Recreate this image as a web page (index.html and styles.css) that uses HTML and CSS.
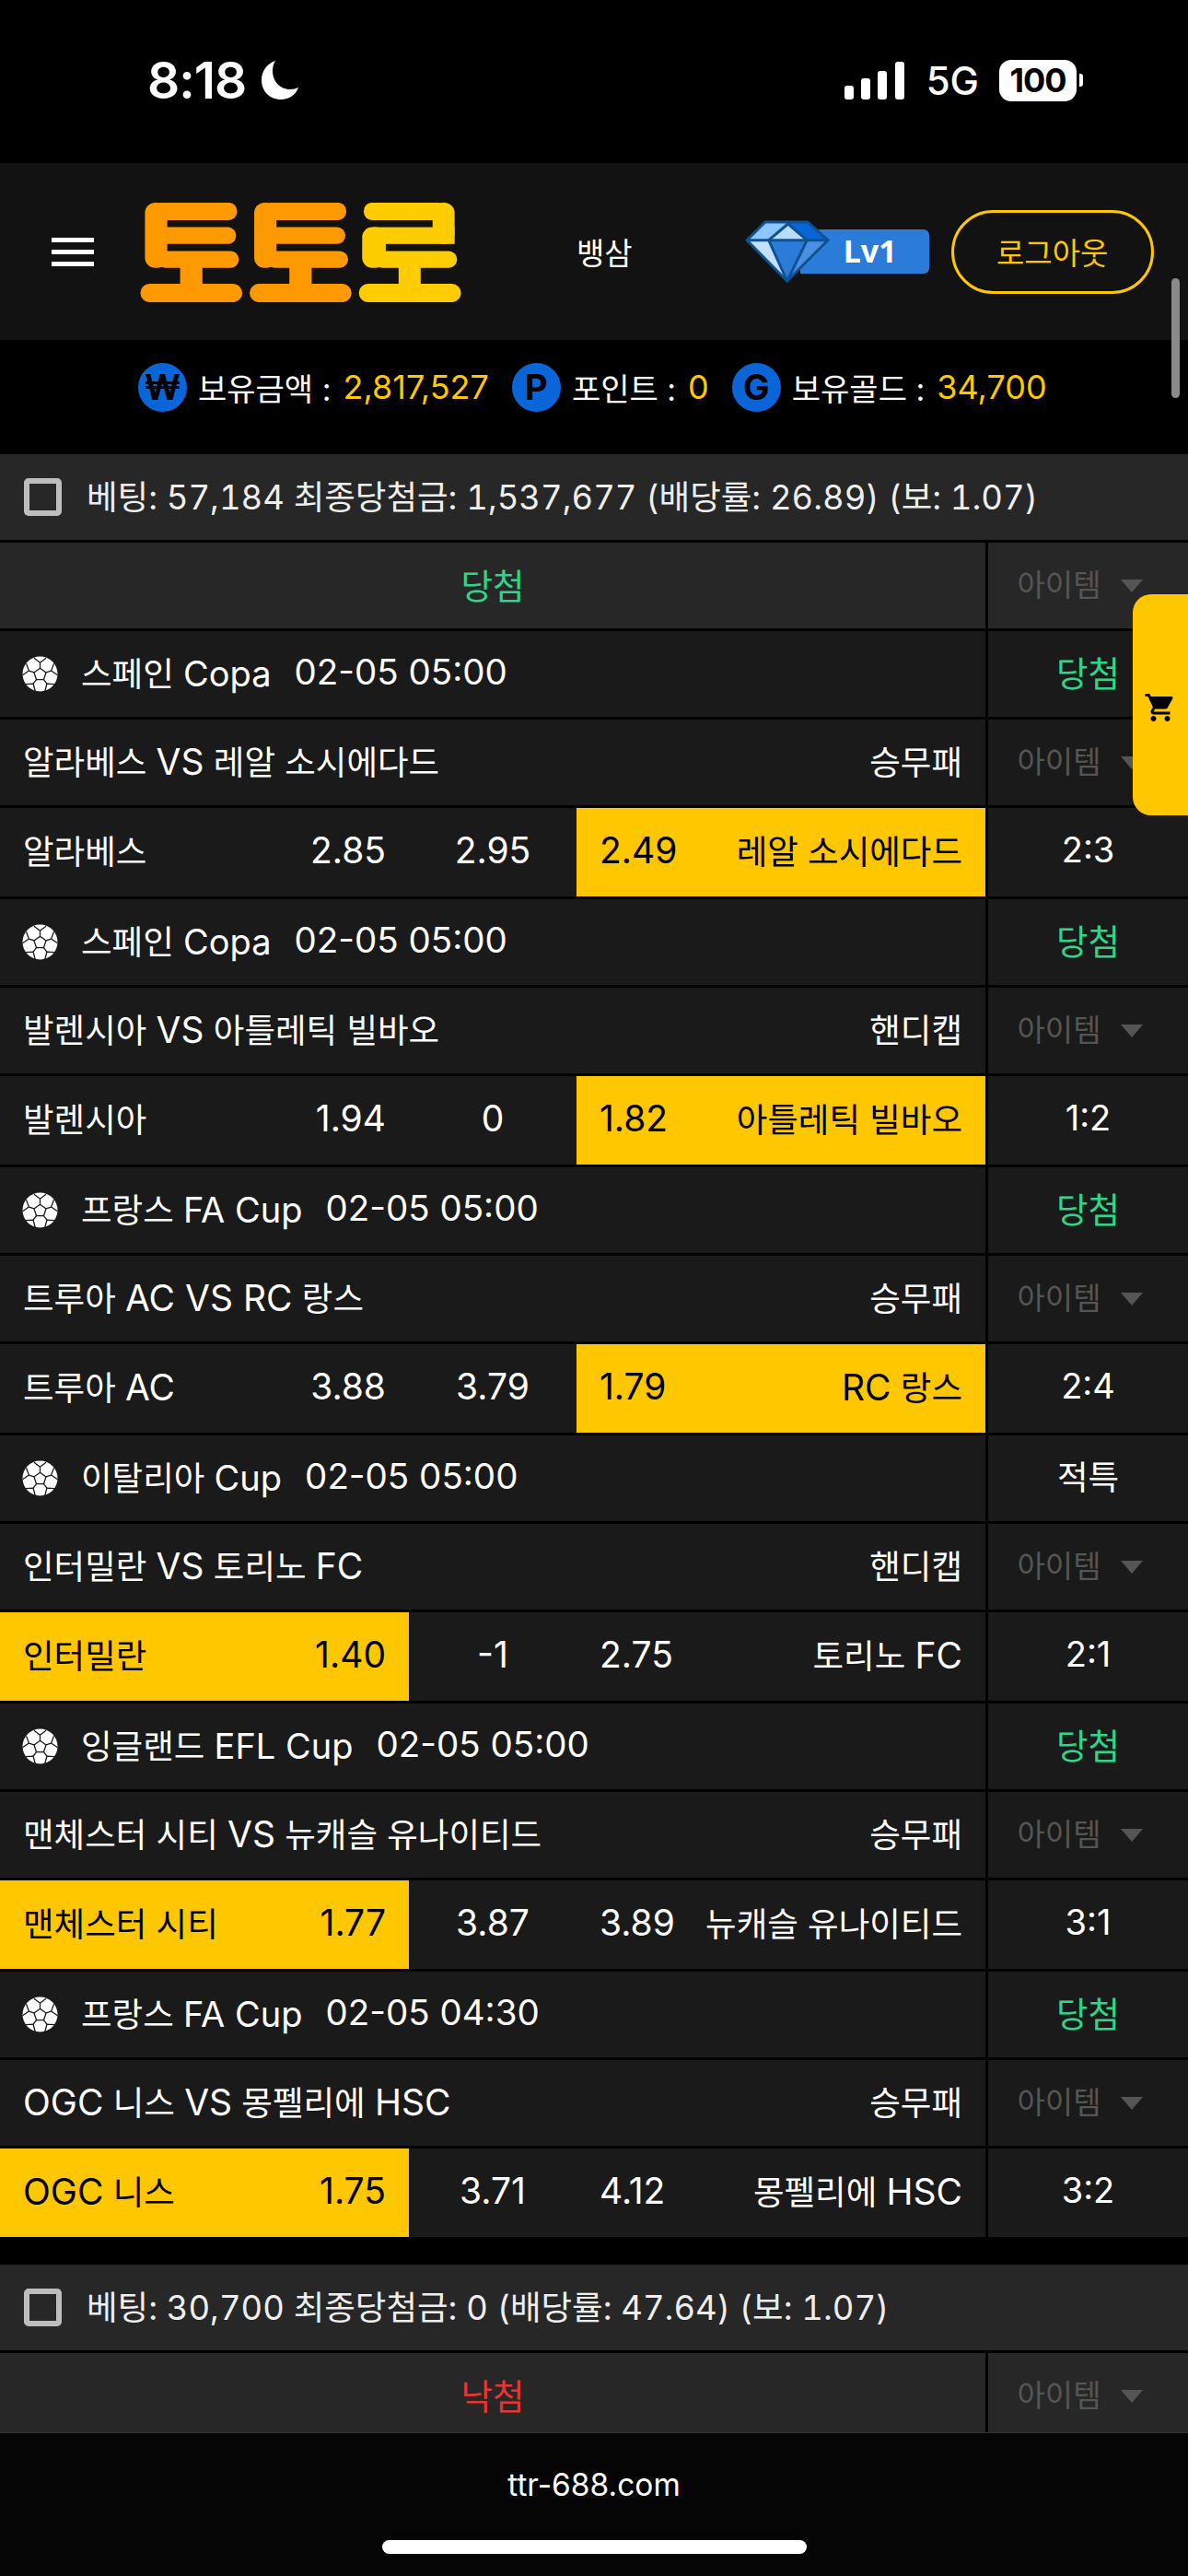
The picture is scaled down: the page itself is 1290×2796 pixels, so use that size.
FILE: index.html
```html
<!DOCTYPE html>
<html lang="ko">
<head>
    <meta charset="UTF-8">
    <meta name="viewport" content="width=device-width, initial-scale=1.0">
    <title>토토로</title>
    <link rel="stylesheet" href="styles.css">
</head>
<body>
    <svg class="defs" width="0" height="0">
        <symbol id="ball" viewBox="0 0 40 40">
            <circle cx="20" cy="20" r="19.5" fill="#fff"/>
            <g fill="none" stroke="#1a1a1a" stroke-width="1.3">
                <polygon points="20,13.5 26.7,18.4 24.1,26.2 15.9,26.2 13.3,18.4"/>
                <line x1="20" y1="13.5" x2="20" y2="7.5"/>
                <line x1="26.7" y1="18.4" x2="32.4" y2="16.5"/>
                <line x1="24.1" y1="26.2" x2="27.6" y2="31"/>
                <line x1="15.9" y1="26.2" x2="12.4" y2="31"/>
                <line x1="13.3" y1="18.4" x2="7.6" y2="16.5"/>
                <polyline points="13.3,2.2 20,7.5 26.7,2.2"/>
                <polyline points="35.4,8.5 32.4,16.5 39.5,21.2"/>
                <polyline points="36.2,31.4 27.6,31 25.4,39.2"/>
                <polyline points="14.6,39.2 12.4,31 3.8,31.4"/>
                <polyline points="0.5,21.2 7.6,16.5 4.6,8.5"/>
            </g>
        </symbol>
    </svg>

    <div class="status-bar">
        <div class="status-left">
            <span class="status-time">8:18</span>
            <svg class="moon" viewBox="0 0 40 42"><path d="M15 0C6 3 0 11 0 21c0 12 9 21 21 21 9 0 16-5 19-13-3 1-5 2-9 2C20 31 12 22 12 11c0-4 1-8 3-11z" fill="#fff"/></svg>
        </div>
        <div class="status-right">
            <svg class="signal" viewBox="0 0 65 41" fill="#fff">
                <rect x="0" y="26" width="10" height="15" rx="3"/>
                <rect x="18" y="18" width="10" height="23" rx="3"/>
                <rect x="36" y="10" width="10" height="31" rx="3"/>
                <rect x="55" y="0" width="10" height="41" rx="3"/>
            </svg>
            <span class="status-net">5G</span>
            <div class="battery"><span class="battery-level">100</span><i class="battery-cap"></i></div>
        </div>
    </div>

    <header class="header">
        <div class="menu-btn"><i></i><i></i><i></i></div>
        <svg class="logo" viewBox="21.67 18.33 349.33 108.34" role="img" aria-label="토토로">
            <g id="logo-to" fill="#ff9900">
                <rect x="26.7" y="18.3" width="24.3" height="71" rx="11"/>
                <rect x="36" y="18.3" width="91" height="19" rx="9"/>
                <rect x="40" y="45" width="86" height="18.3" rx="9"/>
                <rect x="40" y="71" width="89" height="18.3" rx="9"/>
                <rect x="65" y="85" width="24.3" height="25"/>
                <rect x="21.7" y="106.7" width="111" height="20" rx="10"/>
            </g>
            <use href="#logo-to" x="119"/>
            <g fill="#ffcc00">
                <rect x="265" y="18.3" width="90" height="19" rx="9"/>
                <rect x="340" y="18.3" width="24" height="45" rx="11"/>
                <rect x="350" y="45" width="14" height="18.3"/>
                <rect x="275" y="45" width="80" height="18.3"/>
                <rect x="263.3" y="45" width="25.7" height="44.3" rx="11"/>
                <rect x="276" y="71" width="90.7" height="18.3" rx="9"/>
                <rect x="303" y="85" width="24" height="25"/>
                <rect x="259.7" y="106.7" width="111.3" height="20" rx="10"/>
            </g>
        </svg>
        <span class="user-name">뱅삼</span>
        <div class="level">
            <svg class="level-gem" viewBox="0 0 92 68">
                <polygon points="22,2 46.7,2 25.7,21.7 2,21.7" fill="#8ec5ff"/>
                <polygon points="46.7,3 67.3,21.7 25.7,21.7" fill="#b9dcff"/>
                <polygon points="46.7,2 68,2 90,21.7 67.3,21.7" fill="#0a66d8"/>
                <polygon points="2,21.7 25.7,21.7 45.7,66" fill="#c4e0ff"/>
                <polygon points="25.7,21.7 67.3,21.7 45.7,66" fill="#2b7cd9"/>
                <polygon points="67.3,21.7 90,21.7 45.7,66" fill="#4a90e2"/>
                <g fill="none" stroke="#0f5291" stroke-width="3" stroke-linejoin="round">
                    <polygon points="22,2 68,2 90,21.7 45.7,66 2,21.7"/>
                    <polyline points="2,21.7 90,21.7"/>
                    <polyline points="25.7,21.7 46.7,4 67.3,21.7"/>
                    <polyline points="25.7,21.7 45.7,66 67.3,21.7"/>
                </g>
            </svg>
            <span class="level-tag">Lv1</span>
        </div>
        <button class="logout-btn">로그아웃</button>
    </header>

    <div class="balance">
        <span class="coin">₩</span>
        <span class="balance-label">보유금액 :</span>
        <span class="balance-value">2,817,527</span>
        <span class="coin coin-p">P</span>
        <span class="balance-label">포인트 :</span>
        <span class="balance-value">0</span>
        <span class="coin coin-g">G</span>
        <span class="balance-label">보유골드 :</span>
        <span class="balance-value">34,700</span>
    </div>

    <div class="bet-list">
        <div class="row row-dark">
            <div class="summary"><i class="check"></i>베팅: 57,184 최종당첨금: 1,537,677 (배당률: 26.89) (보: 1.07)</div>
        </div>
        <div class="row row-dark">
            <div class="main result win">당첨</div>
            <div class="side"><div class="item-select">아이템<i class="caret"></i></div></div>
        </div>

        <div class="row">
            <div class="main league"><svg class="ball"><use href="#ball"/></svg><span>스페인 <b class="lat">Copa</b></span><b class="date">02-05 05:00</b></div>
            <div class="side win">당첨</div>
        </div>
        <div class="row">
            <div class="main teams"><span>알라베스 <b class="lat">VS</b> 레알 소시에다드</span><span>승무패</span></div>
            <div class="side"><div class="item-select">아이템<i class="caret"></i></div></div>
        </div>
        <div class="row row-odds">
            <div class="main picks">
                <div class="pick"><span>알라베스</span><b class="lat">2.85</b></div>
                <div class="pick-draw">2.95</div>
                <div class="pick picked"><b class="lat">2.49</b><span>레알 소시에다드</span></div>
            </div>
            <div class="side score">2:3</div>
        </div>

        <div class="row">
            <div class="main league"><svg class="ball"><use href="#ball"/></svg><span>스페인 <b class="lat">Copa</b></span><b class="date">02-05 05:00</b></div>
            <div class="side win">당첨</div>
        </div>
        <div class="row">
            <div class="main teams"><span>발렌시아 <b class="lat">VS</b> 아틀레틱 빌바오</span><span>핸디캡</span></div>
            <div class="side"><div class="item-select">아이템<i class="caret"></i></div></div>
        </div>
        <div class="row row-odds">
            <div class="main picks">
                <div class="pick"><span>발렌시아</span><b class="lat">1.94</b></div>
                <div class="pick-draw">0</div>
                <div class="pick picked"><b class="lat">1.82</b><span>아틀레틱 빌바오</span></div>
            </div>
            <div class="side score">1:2</div>
        </div>

        <div class="row">
            <div class="main league"><svg class="ball"><use href="#ball"/></svg><span>프랑스 <b class="lat">FA Cup</b></span><b class="date">02-05 05:00</b></div>
            <div class="side win">당첨</div>
        </div>
        <div class="row">
            <div class="main teams"><span>트루아 <b class="lat">AC VS RC</b> 랑스</span><span>승무패</span></div>
            <div class="side"><div class="item-select">아이템<i class="caret"></i></div></div>
        </div>
        <div class="row row-odds">
            <div class="main picks">
                <div class="pick"><span>트루아 <b class="lat">AC</b></span><b class="lat">3.88</b></div>
                <div class="pick-draw">3.79</div>
                <div class="pick picked"><b class="lat">1.79</b><span><b class="lat">RC</b> 랑스</span></div>
            </div>
            <div class="side score">2:4</div>
        </div>

        <div class="row">
            <div class="main league"><svg class="ball"><use href="#ball"/></svg><span>이탈리아 <b class="lat">Cup</b></span><b class="date">02-05 05:00</b></div>
            <div class="side">적특</div>
        </div>
        <div class="row">
            <div class="main teams"><span>인터밀란 <b class="lat">VS</b> 토리노 <b class="lat">FC</b></span><span>핸디캡</span></div>
            <div class="side"><div class="item-select">아이템<i class="caret"></i></div></div>
        </div>
        <div class="row row-odds">
            <div class="main picks">
                <div class="pick picked"><span>인터밀란</span><b class="lat">1.40</b></div>
                <div class="pick-draw">-1</div>
                <div class="pick"><b class="lat">2.75</b><span>토리노 <b class="lat">FC</b></span></div>
            </div>
            <div class="side score">2:1</div>
        </div>

        <div class="row">
            <div class="main league"><svg class="ball"><use href="#ball"/></svg><span>잉글랜드 <b class="lat">EFL Cup</b></span><b class="date">02-05 05:00</b></div>
            <div class="side win">당첨</div>
        </div>
        <div class="row">
            <div class="main teams"><span>맨체스터 시티 <b class="lat">VS</b> 뉴캐슬 유나이티드</span><span>승무패</span></div>
            <div class="side"><div class="item-select">아이템<i class="caret"></i></div></div>
        </div>
        <div class="row row-odds">
            <div class="main picks">
                <div class="pick picked"><span>맨체스터 시티</span><b class="lat">1.77</b></div>
                <div class="pick-draw">3.87</div>
                <div class="pick"><b class="lat">3.89</b><span>뉴캐슬 유나이티드</span></div>
            </div>
            <div class="side score">3:1</div>
        </div>

        <div class="row">
            <div class="main league"><svg class="ball"><use href="#ball"/></svg><span>프랑스 <b class="lat">FA Cup</b></span><b class="date">02-05 04:30</b></div>
            <div class="side win">당첨</div>
        </div>
        <div class="row">
            <div class="main teams"><span><b class="lat">OGC</b> 니스 <b class="lat">VS</b> 몽펠리에 <b class="lat">HSC</b></span><span>승무패</span></div>
            <div class="side"><div class="item-select">아이템<i class="caret"></i></div></div>
        </div>
        <div class="row row-odds">
            <div class="main picks">
                <div class="pick picked"><span><b class="lat">OGC</b> 니스</span><b class="lat">1.75</b></div>
                <div class="pick-draw">3.71</div>
                <div class="pick"><b class="lat">4.12</b><span>몽펠리에 <b class="lat">HSC</b></span></div>
            </div>
            <div class="side score">3:2</div>
        </div>
    </div>

    <div class="bet-list bet-list-next">
        <div class="row row-dark">
            <div class="summary"><i class="check"></i>베팅: 30,700 최종당첨금: 0 (배당률: 47.64) (보: 1.07)</div>
        </div>
        <div class="row row-dark">
            <div class="main result lose">낙첨</div>
            <div class="side"><div class="item-select">아이템<i class="caret"></i></div></div>
        </div>
    </div>

    <footer class="url-bar">
        <span class="url-text">ttr-688.com</span>
        <i class="home-bar"></i>
    </footer>

    <div class="scroll-thumb"></div>
    <div class="cart-tab">
        <svg class="cart-icon" viewBox="0 0 24 24"><path d="M7 18c-1.1 0-1.99.9-1.99 2S5.9 22 7 22s2-.9 2-2-.9-2-2-2zM1 2v2h2l3.6 7.59-1.35 2.45c-.16.28-.25.61-.25.96 0 1.1.9 2 2 2h12v-2H7.42c-.14 0-.25-.11-.25-.25l.03-.12.9-1.63h7.45c.75 0 1.41-.41 1.75-1.03l3.58-6.49c.08-.14.12-.31.12-.48 0-.55-.45-1-1-1H5.21l-.94-2H1zm16 16c-1.1 0-1.99.9-1.99 2s.89 2 1.99 2 2-.9 2-2-.9-2-2-2z"/></svg>
    </div>
</body>
</html>
```

FILE: styles.css
```css
* {
    box-sizing: border-box;
}
body {
    position: relative;
    width: 1290px;
    height: 2796px;
    margin: 0;
    overflow: hidden;
    background: #000;
    color: #fff;
    font-family: Inter, "Noto Sans CJK KR", sans-serif;
    font-size: 36.5px;
}
.defs {
    position: absolute;
}
b {
    font-weight: 400;
}

/* status bar */
.status-bar {
    display: flex;
    justify-content: space-between;
    align-items: center;
    height: 177px;
    padding: 0 114px 3px 160px;
}
.status-left,
.status-right {
    display: flex;
    align-items: center;
}
.status-time {
    font-size: 55px;
    font-weight: 600;
    letter-spacing: -1px;
}
.moon {
    width: 40px;
    height: 42px;
    margin-left: 17px;
}
.signal {
    width: 65px;
    height: 41px;
}
.status-net {
    margin-left: 24px;
    font-size: 42px;
    font-weight: 500;
}
.battery {
    display: flex;
    align-items: center;
    margin-left: 22px;
}
.battery-level {
    width: 84px;
    height: 45px;
    border-radius: 13px;
    background: #fff;
    color: #000;
    font-size: 36px;
    font-weight: 700;
    line-height: 45px;
    text-align: center;
    letter-spacing: -1px;
}
.battery-cap {
    width: 4px;
    height: 14px;
    margin-left: 3px;
    border-radius: 0 3px 3px 0;
    background: #fff;
}

/* header */
.header {
    display: flex;
    align-items: center;
    height: 192px;
    padding-left: 56px;
    background: #121212;
}
.menu-btn {
    display: flex;
    flex-direction: column;
    gap: 8px;
    width: 46px;
}
.menu-btn i {
    height: 5px;
    background: #fff;
}
.logo {
    width: 349px;
    height: 108px;
    margin-left: 50px;
    margin-top: 2px;
}
.user-name {
    margin-left: 125px;
    font-size: 33px;
}
.level {
    position: relative;
    display: flex;
    align-items: center;
    margin-left: 122px;
    width: 200px;
}
.level-gem {
    position: relative;
    z-index: 1;
    width: 92px;
    height: 68px;
}
.level-tag {
    width: 140px;
    height: 48px;
    margin-left: -32px;
    padding-left: 47px;
    border-radius: 0 6px 6px 0;
    background: #2b7cd9;
    font-family: "Noto Sans", sans-serif;
    font-size: 34px;
    font-weight: 700;
    line-height: 46px;
}
.logout-btn {
    width: 220px;
    height: 91px;
    margin-left: 24px;
    border: 3px solid #ffc700;
    border-radius: 46px;
    background: transparent;
    color: #ffc700;
    font-family: inherit;
    font-size: 33px;
}

/* balance */
.balance {
    display: flex;
    align-items: center;
    height: 124px;
    padding-left: 150px;
    padding-bottom: 22px;
    font-size: 34px;
}
.coin {
    width: 53px;
    height: 53px;
    margin-right: 12px;
    border-radius: 50%;
    background: #0a66d8;
    color: #000;
    font-size: 38px;
    font-weight: 700;
    line-height: 53px;
    text-align: center;
}
.coin-p {
    margin-left: 25px;
}
.coin-g {
    margin-left: 25px;
}
.balance-value {
    margin-left: 13px;
    color: #ffc700;
    font-size: 36px;
}

/* bet rows */
.bet-list {
    display: flex;
    flex-direction: column;
    gap: 3px;
}
.bet-list-next {
    margin-top: 30px;
}
.row {
    display: flex;
    gap: 3px;
    height: 93px;
    background: #000;
}
.row-odds {
    height: 96px;
}
.main {
    display: flex;
    align-items: center;
    width: 1070px;
    padding-bottom: 5px;
    background: #1a1a1a;
}
.side {
    display: flex;
    justify-content: center;
    align-items: center;
    flex: 1;
    padding-bottom: 6px;
    background: #1a1a1a;
}
.row-dark .main,
.row-dark .side {
    background: #272727;
}
.lat {
    font-size: 39px;
}
.score {
    font-size: 38px;
}
.summary {
    display: flex;
    align-items: center;
    width: 100%;
    padding: 0 0 5px 26px;
    background: #272727;
    color: #eee;
    font-feature-settings: "tnum";
}
.check {
    width: 41px;
    height: 41px;
    margin-top: 5px;
    margin-right: 27px;
    border: 6px solid #bdbdbd;
    border-radius: 5px;
}
.result {
    justify-content: center;
}
.win {
    color: #2ed58a;
    font-size: 37.5px;
}
.lose {
    color: #e53535;
    font-size: 37.5px;
}
.item-select {
    display: flex;
    align-items: center;
    gap: 21px;
    margin-left: -18px;
    color: #555;
    font-size: 33px;
}
.caret {
    width: 0;
    height: 0;
    border-left: 12px solid transparent;
    border-right: 12px solid transparent;
    border-top: 14px solid #555;
    margin-top: 6px;
}
.league {
    padding-left: 24px;
}
.league .lat {
    font-size: 38px;
}
.ball {
    width: 39px;
    height: 39px;
    margin-top: 5px;
    margin-right: 25px;
}
.date {
    margin-left: 25px;
    font-size: 38.5px;
}
.teams {
    justify-content: space-between;
    padding: 0 25px 5px 25px;
}
.picks {
    padding: 0;
    background: transparent;
}
.pick {
    display: flex;
    justify-content: space-between;
    align-items: center;
    width: 444px;
    height: 100%;
    padding: 0 25px 5px 25px;
    background: #1a1a1a;
}
.pick.picked {
    background: #ffc700;
    color: #000;
}
.pick-draw {
    display: flex;
    justify-content: center;
    align-items: center;
    width: 182px;
    height: 100%;
    padding-bottom: 5px;
    background: #1a1a1a;
    font-size: 39px;
}

/* bottom bar, fixed over the list */
.url-bar {
    position: absolute;
    left: 0;
    right: 0;
    bottom: 0;
    display: flex;
    flex-direction: column;
    align-items: center;
    height: 156px;
    padding-top: 34px;
    border-top: 1px solid #333;
    background: #050505;
}
.url-text {
    font-size: 33.5px;
    line-height: 44px;
}
.home-bar {
    width: 461px;
    height: 15px;
    margin-top: 38px;
    border-radius: 8px;
    background: #fff;
}

/* overlays */
.scroll-thumb {
    position: absolute;
    top: 302px;
    left: 1272px;
    width: 9px;
    height: 130px;
    border-radius: 5px;
    background: #8a8a8a;
}
.cart-tab {
    position: absolute;
    top: 645px;
    right: 0;
    display: flex;
    align-items: center;
    width: 60px;
    height: 240px;
    padding-left: 12px;
    border-radius: 20px 0 0 20px;
    background: #ffc700;
}
.cart-icon {
    width: 36px;
    height: 36px;
    margin-top: 6px;
}
```
